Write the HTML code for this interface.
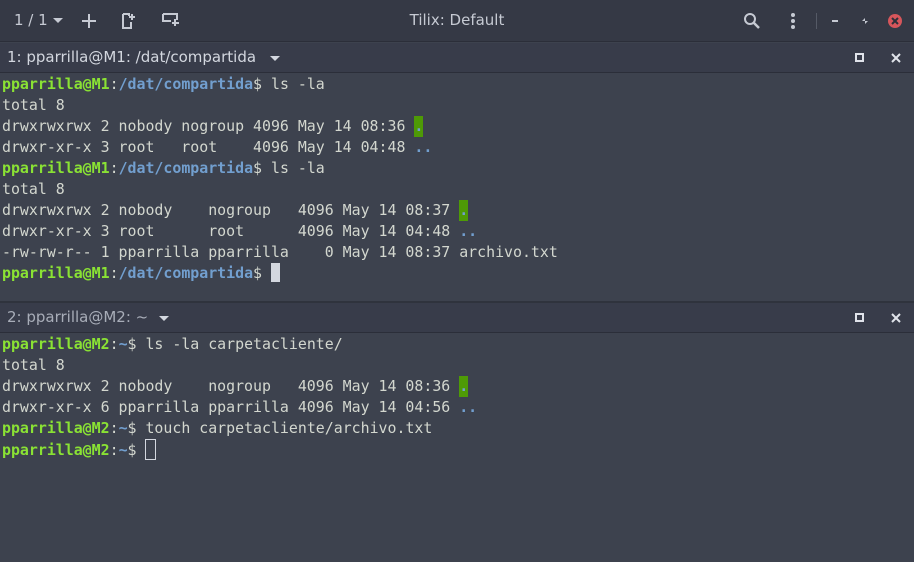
<!DOCTYPE html>
<html><head><style>
*{margin:0;padding:0;box-sizing:border-box}
body{width:914px;height:562px;overflow:hidden;background:#3d424e;font-family:"DejaVu Sans",sans-serif;position:relative}
.tb{position:absolute;left:0;top:0;width:914px;height:42px;background:#353945;border-bottom:1px solid #2b2e39;color:#c6cad3}
.hd{position:absolute;left:0;width:914px;height:30px;background:#383c4a;border-bottom:1px solid #2b2e39;font-size:15px;color:#d3d7df}
.term{position:absolute;left:2px;font-family:"DejaVu Sans Mono",monospace;font-size:14.9px;line-height:21px;color:#d3d7cf;white-space:pre}
.g{color:#8ae234;font-weight:bold}.b{color:#729fcf;font-weight:bold}
.gb{background:#4e9a06;color:#729fcf;display:inline-block;width:9px;font-weight:bold}
.bb{color:#729fcf;font-weight:bold}
.abs{position:absolute}
</style></head><body>
<div class="tb">
<div class="abs" style="left:14px;top:11px;font-size:15px">1 / 1</div>
<div class="abs" style="left:53px;top:18px;width:0;height:0;border-left:5px solid transparent;border-right:5px solid transparent;border-top:5px solid #c6cad3"></div>
<svg class="abs" style="left:80px;top:12px" width="18" height="18"><path d="M9 2v14M2 9h14" stroke="#c6cad3" stroke-width="2"/></svg>
<svg class="abs" style="left:120px;top:12px" width="16" height="18"><path d="M3 2h6v2M3 2v14h8v-6" stroke="#c6cad3" stroke-width="2" fill="none"/><path d="M12 2v6M9 5h6" stroke="#c6cad3" stroke-width="2"/></svg>
<svg class="abs" style="left:162px;top:13px" width="18" height="14"><path d="M1 1h14v6M1 1v7h8" stroke="#c6cad3" stroke-width="2" fill="none"/><path d="M13 6v7M10 10h7" stroke="#c6cad3" stroke-width="2"/></svg>
<div class="abs" style="left:0;width:914px;text-align:center;top:11px;font-size:15px;color:#c6cad3">Tilix: Default</div>
<svg class="abs" style="left:743px;top:12px" width="18" height="18"><circle cx="7" cy="7" r="5" stroke="#c6cad3" stroke-width="2" fill="none"/><path d="M11 11l5 5" stroke="#c6cad3" stroke-width="2.5"/></svg>
<svg class="abs" style="left:789px;top:12px" width="8" height="18"><circle cx="4" cy="3" r="2" fill="#c6cad3"/><circle cx="4" cy="9" r="2" fill="#c6cad3"/><circle cx="4" cy="15" r="2" fill="#c6cad3"/></svg>
<div class="abs" style="left:816px;top:13px;width:1px;height:16px;background:#555a66"></div>
<div class="abs" style="left:832px;top:20px;width:6px;height:2px;background:#c6cad3"></div>
<svg class="abs" style="left:861px;top:17px" width="8" height="8"><path d="M1 4l3-3v3zM7 4l-3 3v-3z" fill="#c6cad3"/></svg>
<svg class="abs" style="left:885px;top:11px" width="20" height="20"><circle cx="10" cy="10" r="7" fill="#d6565b"/><path d="M7 7l6 6M13 7l-6 6" stroke="#2d303a" stroke-width="2"/></svg>
</div>
<div class="hd" style="top:43px"><span class="abs" style="left:7px;top:5px">1: pparrilla@M1: /dat/compartida</span>
<div class="abs" style="left:270px;top:13px;border-left:5px solid transparent;border-right:5px solid transparent;border-top:5px solid #d3d7df"></div>
<div class="abs" style="left:855px;top:10px;width:9px;height:9px;border:2px solid #e0e3ea"></div>
<svg class="abs" style="left:891px;top:10px" width="10" height="10"><path d="M1 1l8 8M9 1l-8 8" stroke="#e0e3ea" stroke-width="2"/></svg></div>
<div class="term" style="top:74px"><span class="g">pparrilla@M1</span>:<span class="b">/dat/compartida</span>$ ls -la
total 8
drwxrwxrwx 2 nobody nogroup 4096 May 14 08:36 <span class="gb">.</span>
drwxr-xr-x 3 root   root    4096 May 14 04:48 <span class="bb">..</span>
<span class="g">pparrilla@M1</span>:<span class="b">/dat/compartida</span>$ ls -la
total 8
drwxrwxrwx 2 nobody    nogroup   4096 May 14 08:37 <span class="gb">.</span>
drwxr-xr-x 3 root      root      4096 May 14 04:48 <span class="bb">..</span>
-rw-rw-r-- 1 pparrilla pparrilla    0 May 14 08:37 archivo.txt
<span class="g">pparrilla@M1</span>:<span class="b">/dat/compartida</span>$ <span style="display:inline-block;width:9px;height:19px;background:#d3d7df;vertical-align:-4px"></span></div>
<div class="abs" style="left:0;top:301px;width:914px;height:2px;background:#2f333d"></div>
<div class="hd" style="top:303px;color:#a8adb8"><span class="abs" style="left:7px;top:5px">2: pparrilla@M2: ~</span>
<div class="abs" style="left:159px;top:13px;border-left:5px solid transparent;border-right:5px solid transparent;border-top:5px solid #d3d7df"></div>
<div class="abs" style="left:855px;top:10px;width:9px;height:9px;border:2px solid #e0e3ea"></div>
<svg class="abs" style="left:891px;top:10px" width="10" height="10"><path d="M1 1l8 8M9 1l-8 8" stroke="#e0e3ea" stroke-width="2"/></svg></div>
<div class="term" style="top:334px"><span class="g">pparrilla@M2</span>:<span class="b">~</span>$ ls -la carpetacliente/
total 8
drwxrwxrwx 2 nobody    nogroup   4096 May 14 08:36 <span class="gb">.</span>
drwxr-xr-x 6 pparrilla pparrilla 4096 May 14 04:56 <span class="bb">..</span>
<span class="g">pparrilla@M2</span>:<span class="b">~</span>$ touch carpetacliente/archivo.txt
<span class="g">pparrilla@M2</span>:<span class="b">~</span>$ <span style="display:inline-block;width:11px;height:21px;border:1px solid #d3d7df;vertical-align:-5px"></span></div>
</body></html>
